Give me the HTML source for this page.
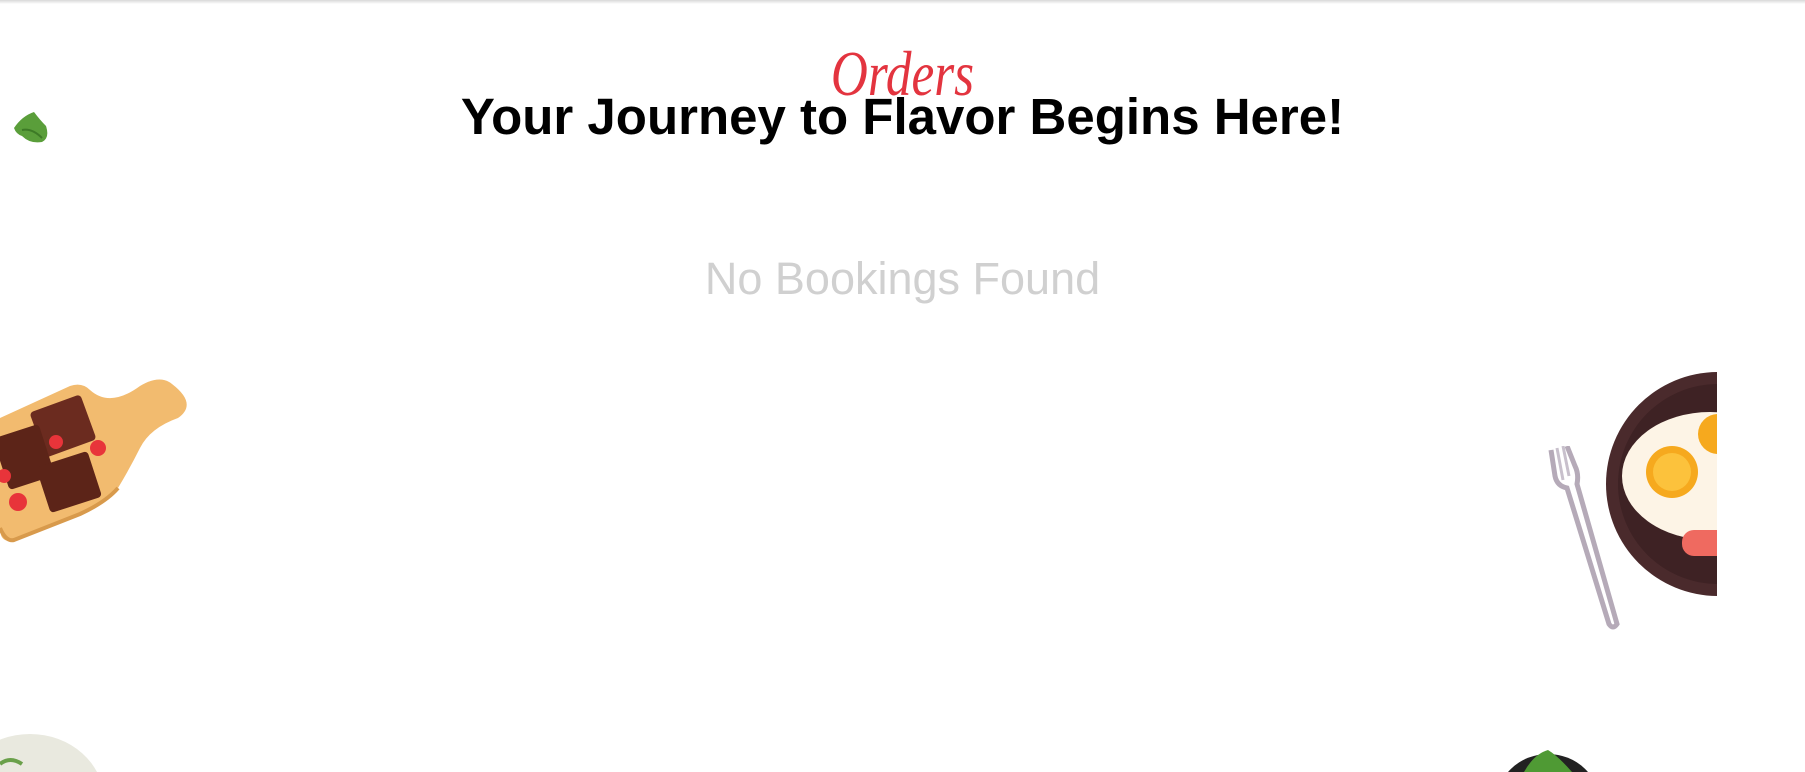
<!DOCTYPE html>
<html><head><meta charset="utf-8"><style>
html,body{margin:0;padding:0;width:1805px;height:772px;overflow:hidden;background:#fff;position:relative;font-family:"Liberation Sans",Arial,sans-serif}
.topbar{position:absolute;left:0;top:0;width:1805px;height:4px;background:linear-gradient(#d8d8d8,#fff)}
.orders{position:absolute;left:0;width:1805px;top:42px;text-align:center;font-family:"Liberation Serif",serif;font-style:italic;font-size:64px;color:#e3343f;line-height:1;transform:scaleX(.8)}
.h1{position:absolute;left:0;width:1805px;top:91px;text-align:center;font-weight:bold;font-size:51px;line-height:1;color:#000}
.nb{position:absolute;left:0;width:1805px;top:256px;text-align:center;font-size:45px;line-height:1;color:#d0d0d0}
svg{position:absolute}
</style></head><body>
<div class="topbar"></div>
<div class="orders">Orders</div>
<div class="h1">Your Journey to Flavor Begins Here!</div>
<div class="nb">No Bookings Found</div>

<svg style="left:10px;top:108px" width="42" height="38" viewBox="0 0 42 38"><path d="M4 20 Q12 8 24 4 Q30 12 36 18 Q40 30 32 34 Q20 36 12 28 Q6 26 4 20Z" fill="#5a9e3a"/><path d="M12 22 Q22 20 32 30" stroke="#3d7a26" stroke-width="2" fill="none"/></svg>

<svg style="left:0;top:378px" width="196" height="166" viewBox="0 0 196 166"><path d="M0 40 L70 8 Q82 4 90 12 Q110 30 140 8 Q160 -4 172 6 Q198 26 178 40 Q150 50 140 70 Q130 90 118 110 Q106 124 80 136 L14 162 Q0 166 0 150Z" fill="#f2bb6f"/><path d="M0 150 Q6 164 14 162 L80 136 Q106 124 118 110" stroke="#d89a4c" stroke-width="4" fill="none"/><rect x="36" y="24" width="54" height="48" rx="4" transform="rotate(-20 63 48)" fill="#6b2b1f"/><rect x="0" y="52" width="48" height="54" rx="4" transform="rotate(-18 24 79)" fill="#5c2418"/><rect x="42" y="80" width="54" height="48" rx="4" transform="rotate(-18 69 104)" fill="#5c2418"/><circle cx="56" cy="64" r="7" fill="#e8343a"/><circle cx="98" cy="70" r="8" fill="#e8343a"/><circle cx="18" cy="124" r="9" fill="#e8343a"/><circle cx="4" cy="98" r="7" fill="#e8343a"/></svg>

<svg style="left:1545px;top:446px" width="82" height="184" viewBox="0 0 82 184"><path d="M6 4 L10 30 Q12 40 22 42 L64 178 Q68 184 72 178 L32 38 Q34 28 30 20 L22 0" stroke="#b5aab8" stroke-width="5" fill="none"/><path d="M12 2 L18 34 M18 0 L24 30" stroke="#c8c0cc" stroke-width="3"/></svg>

<svg style="left:1600px;top:368px" width="117" height="232" viewBox="0 0 117 232"><circle cx="118" cy="116" r="112" fill="#4a2a2c"/><circle cx="118" cy="116" r="100" fill="#3e2224"/><ellipse cx="110" cy="108" rx="88" ry="64" fill="#fdf4e6"/><circle cx="72" cy="104" r="26" fill="#f6a91e"/><circle cx="72" cy="104" r="19" fill="#fcc23c"/><circle cx="118" cy="66" r="20" fill="#f6a91e"/><rect x="82" y="162" width="50" height="26" rx="12" fill="#ef6a60"/></svg>

<svg style="left:0;top:734px" width="106" height="38" viewBox="0 0 106 38"><ellipse cx="30" cy="66" rx="74" ry="66" fill="#e9e9df"/><path d="M0 30 Q10 22 22 30" stroke="#6aa04a" stroke-width="4" fill="none"/></svg>

<svg style="left:1494px;top:750px" width="108" height="22" viewBox="0 0 108 22"><ellipse cx="54" cy="54" rx="52" ry="50" fill="#222"/><path d="M30 22 Q40 4 54 0 Q64 6 78 22Z" fill="#4f9a34"/></svg>
</body></html>
